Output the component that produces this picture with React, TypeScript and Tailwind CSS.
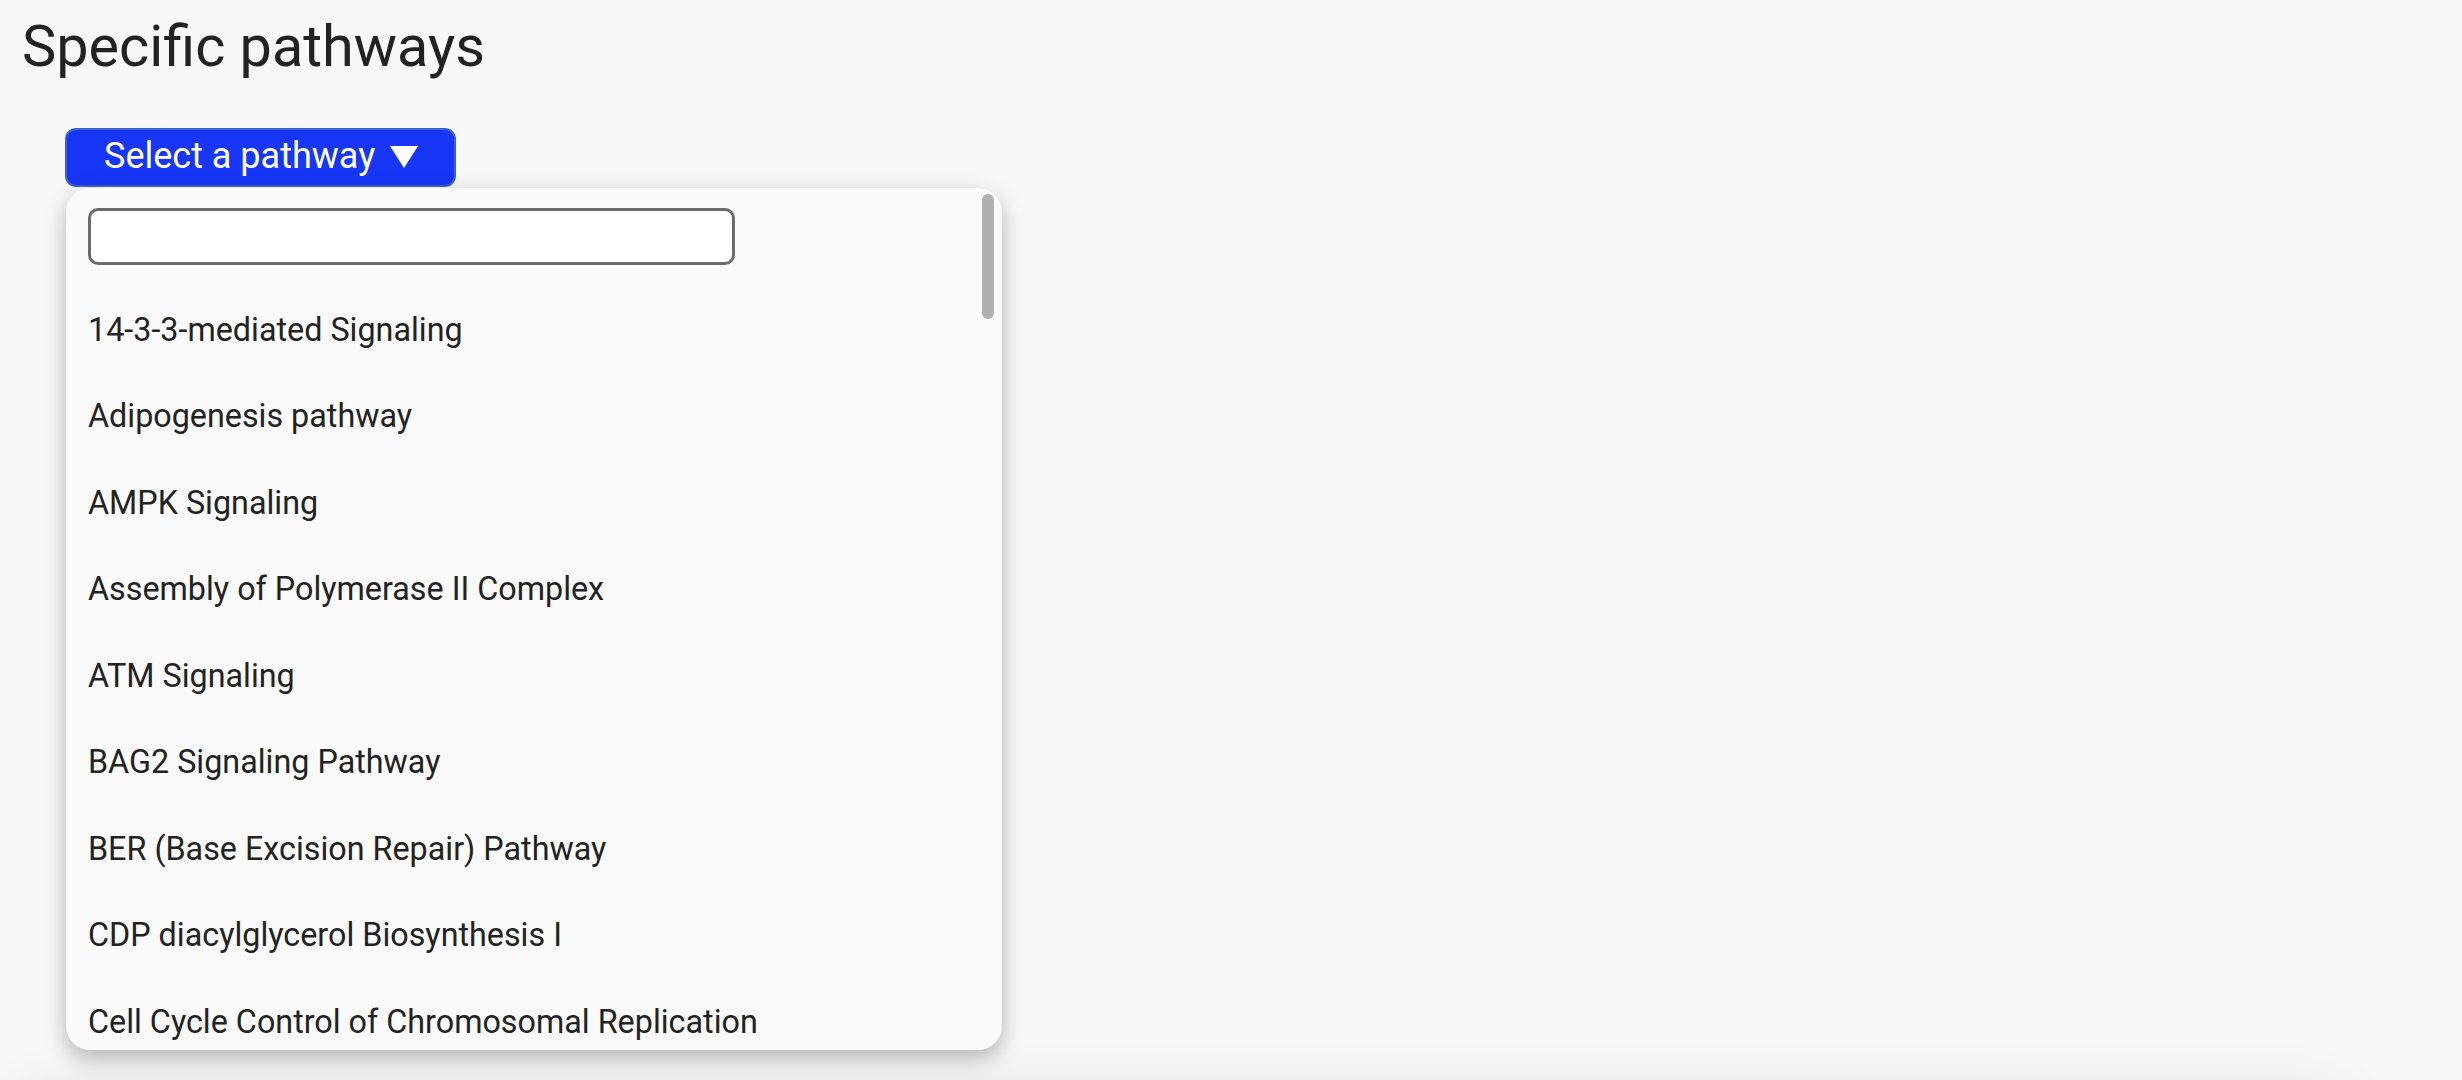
import { useState } from "react";

const pathways = [
  "14-3-3-mediated Signaling",
  "Adipogenesis pathway",
  "AMPK Signaling",
  "Assembly of Polymerase II Complex",
  "ATM Signaling",
  "BAG2 Signaling Pathway",
  "BER (Base Excision Repair) Pathway",
  "CDP diacylglycerol Biosynthesis I",
  "Cell Cycle Control of Chromosomal Replication",
];

const PathwayDropdown = () => {
  const [query, setQuery] = useState("");
  const items = pathways.filter((p) =>
    p.toLowerCase().includes(query.toLowerCase())
  );

  return (
    <div className="absolute left-[1px] top-[calc(100%+1px)] z-10 h-[862px] w-[936px] overflow-hidden rounded-[24px] bg-[#fafafa] shadow-[0_8px_22px_rgba(0,0,0,0.28)]">
      <div className="px-[22px] pt-[20px]">
        <input
          value={query}
          onChange={(e) => setQuery(e.target.value)}
          className="block h-[57px] w-[647px] rounded-[10px] border-[3px] border-[#6b6b6b] bg-white px-3 text-[30px] outline-none"
        />
        <ul className="mt-[22px]">
          {items.map((p) => (
            <li key={p} className="flex h-[86.5px] items-center text-[32.3px]">
              {p}
            </li>
          ))}
        </ul>
      </div>
      {/* overlay scrollbar thumb */}
      <div className="absolute right-[8px] top-[6px] h-[125px] w-[12px] rounded-full bg-[#b0b0b0]"></div>
    </div>
  );
};

export default function App() {
  const [open, setOpen] = useState(true);

  return (
    <div className="relative h-[1080px] overflow-hidden bg-[#f8f8f8] font-['Roboto',sans-serif] text-[#222222]">
      <section className="px-[22px] pt-[18px]">
        <h2 className="text-[57.6px] leading-none">Specific pathways</h2>
        <div className="relative ml-[43px] mt-[52px] inline-block">
          <button
            onClick={() => setOpen(!open)}
            className="flex h-[59px] items-center rounded-[11px] border-2 border-[#3d63c9] bg-[#1736f5] pl-[37px] pr-[36px] pb-[3px] text-[36px] leading-none text-white"
          >
            <span>Select a pathway</span>
            <svg viewBox="0 0 28 22" className="ml-[15px] mt-[3px] h-[22px] w-[28px]">
              <path d="M0 0 H28 L14 22 Z" fill="white" />
            </svg>
          </button>
          {open && <PathwayDropdown />}
        </div>
      </section>
      <div className="ml-[22px] mr-[122px] mt-[913px] h-[400px] rounded-[24px] bg-[#f8f8f8] shadow-[0_0_60px_rgba(0,0,0,0.16)]"></div>
    </div>
  );
}
